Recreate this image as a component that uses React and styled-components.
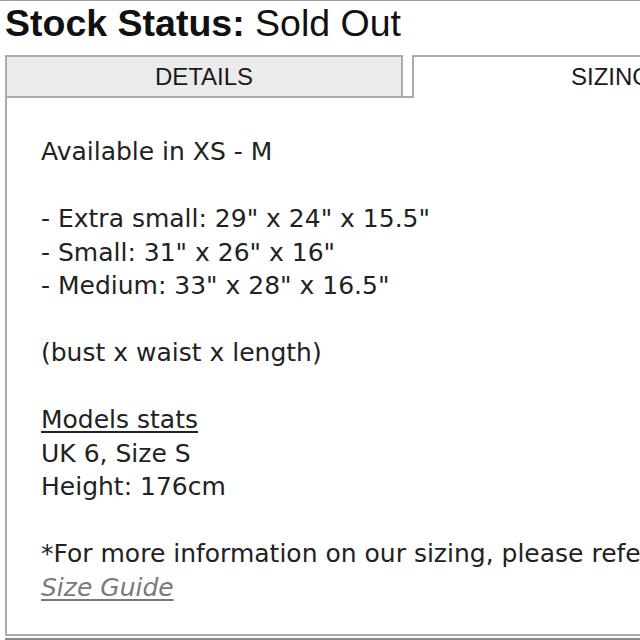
import React from "react";
import styled, { createGlobalStyle } from "styled-components";

const GlobalStyle = createGlobalStyle`
  html, body {
    margin: 0;
    padding: 0;
    background: #ffffff;
    overflow: hidden;
  }
`;

const Page = styled.div`
  width: 830px;
  padding-left: 5px;
  border-top: 1px solid #9c9c9c;
`;

const Title = styled.h1`
  margin: 0;
  padding-top: 2px;
  font-family: "Liberation Sans", Arial, sans-serif;
  font-size: 37.5px;
  line-height: 40px;
  font-weight: 400;
  color: #111;

  b {
    font-weight: 700;
  }
`;

const TabBar = styled.div`
  display: flex;
  margin-top: 12px;
`;

const Tab = styled.div`
  box-sizing: border-box;
  width: 398px;
  height: 43px;
  border: 2px solid #ababab;
  border-bottom: ${(p) => (p.$active ? "none" : "2px solid #ababab")};
  background: ${(p) => (p.$active ? "#ffffff" : "#ebebeb")};
  font-family: "Liberation Sans", Arial, sans-serif;
  font-size: 24px;
  line-height: 39px;
  text-align: center;
  color: #1a1a1a;
`;

const TabGap = styled.div`
  box-sizing: border-box;
  width: 9px;
  height: 43px;
  border-bottom: 2px solid #ababab;
`;

const Panel = styled.div`
  box-sizing: border-box;
  height: 538px;
  border: 2px solid #ababab;
  border-top: none;
  padding: 37px 34px 0;
  font-family: "DejaVu Sans", Verdana, sans-serif;
  font-size: 25px;
  line-height: 33.5px;
  color: #222;
`;

const Para = styled.p`
  margin: 0 0 33.5px;
  white-space: nowrap;
`;

const Underlined = styled.span`
  text-decoration: underline;
  text-underline-offset: 3px;
`;

const GuideLink = styled.a`
  color: #7a7a7a;
  font-style: italic;
  text-decoration: underline;
  text-underline-offset: 3px;
`;

const BottomRule = styled.div`
  height: 2px;
  margin-top: 2px;
  background: #8a8a8a;
`;

export default function App() {
  return (
    <>
      <GlobalStyle />
      <Page>
        <Title>
          <b>Stock Status:</b> Sold Out
        </Title>
        <TabBar>
          <Tab>DETAILS</Tab>
          <TabGap />
          <Tab $active>SIZING</Tab>
        </TabBar>
        <Panel>
          <Para>Available in XS - M</Para>
          <Para>
            - Extra small: 29" x 24" x 15.5"
            <br />- Small: 31" x 26" x 16"
            <br />- Medium: 33" x 28" x 16.5"
          </Para>
          <Para>(bust x waist x length)</Para>
          <Para>
            <Underlined>Models stats</Underlined>
            <br />
            UK 6, Size S
            <br />
            Height: 176cm
          </Para>
          <Para>
            *For more information on our sizing, please refer to our
            <br />
            <GuideLink href="#">Size Guide</GuideLink>
          </Para>
        </Panel>
        <BottomRule />
      </Page>
    </>
  );
}
